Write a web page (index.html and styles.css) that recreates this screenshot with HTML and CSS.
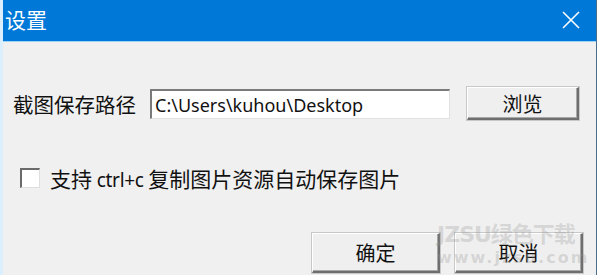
FILE: index.html
```html
<!DOCTYPE html>
<html lang="zh-CN">
<head>
    <meta charset="UTF-8">
    <title>设置</title>
  <link rel="stylesheet" href="styles.css">
</head>
<body>
  <div class="window">
    <div class="titlebar">
      <span class="title">设置</span>
      <span class="close">
        <svg width="18" height="18" viewBox="0 0 18 18">
          <path d="M1 1 L17 17 M17 1 L1 17" stroke="#ffffff" stroke-width="1.6" fill="none"/>
        </svg>
      </span>
    </div>

    <div class="content">
      <div class="row path-row">
        <label class="label">截图保存路径</label>
        <input class="path" type="text" value="C:\Users\kuhou\Desktop">
        <button class="btn browse">浏览</button>
      </div>

      <div class="row check-row">
        <span class="checkbox"></span>
        <span class="check-text">支持 <span class="latin">ctrl+c</span> 复制图片资源自动保存图片</span>
      </div>

      <div class="row actions">
        <button class="btn big">确定</button>
        <button class="btn big">取消</button>
      </div>
    </div>

    <div class="watermark">
      <div class="wm-big">JZSU绿色下载</div>
      <div class="wm-small">www.jzsu.com</div>
    </div>
  </div>
</body>
</html>
```

FILE: styles.css
```css
body {
  margin: 0;
  background: #ffffff;
  font-family: "Noto Sans CJK SC", "DejaVu Sans", sans-serif;
  overflow: hidden;
}

.window {
  position: relative;
  width: 597px;
  height: 275px;
  background: #f0f0f0;
  border-left: 3px solid #dcefff;
  border-right: 1px solid #4a6d8c;
  box-sizing: border-box;
}

.titlebar {
  display: flex;
  align-items: center;
  justify-content: space-between;
  height: 41px;
  background: #0078d7;
  border-bottom: 1px solid #9fd3f5;
  padding: 0 16px 0 2px;
}

.title {
  color: #ffffff;
  font-size: 21px;
  margin-top: -3px;
}

.close {
  display: flex;
  margin-top: -2px;
}

.content {
  padding: 46px 0 0 10px;
}

.row {
  display: flex;
  align-items: center;
}

.label {
  font-size: 20.5px;
  color: #111111;
  width: 137px;
}

.path {
  width: 300px;
  height: 30px;
  box-sizing: border-box;
  border-top: 2px solid #7a7a7a;
  border-left: 2px solid #7a7a7a;
  border-right: 1px solid #e0e0e0;
  border-bottom: 1px solid #e0e0e0;
  background: #ffffff;
  font-family: "Noto Sans", "DejaVu Sans", sans-serif;
  font-size: 18px;
  padding: 0 3px;
  color: #111111;
  outline: none;
}

.btn {
  box-sizing: border-box;
  background: #efefef;
  border-top: 1px solid #ffffff;
  border-left: 1px solid #ffffff;
  border-right: 2px solid #6e6e6e;
  border-bottom: 2px solid #6e6e6e;
  box-shadow: inset -1px -1px 0 #a8a8a8, 0 0 0 1px #c8c8c8;
  font-family: "Noto Sans CJK SC", sans-serif;
  font-size: 20px;
  color: #111111;
  padding: 0;
}

.browse {
  width: 112px;
  height: 33px;
  margin-left: 17px;
  margin-top: -1px;
}

.check-row {
  margin-top: 43px;
  padding-left: 7px;
}

.checkbox {
  width: 20px;
  height: 20px;
  box-sizing: border-box;
  background: #ffffff;
  border-top: 2px solid #6a6a6a;
  border-left: 2px solid #6a6a6a;
  border-right: 1px solid #dedede;
  border-bottom: 1px solid #dedede;
}

.check-text {
  margin-left: 10px;
  font-size: 21px;
  color: #111111;
}

.latin {
  font-family: "Noto Sans", sans-serif;
  font-size: 19px;
  letter-spacing: -0.3px;
}

.actions {
  margin-top: 40px;
  padding-left: 299px;
  gap: 15px;
}

.big {
  width: 128px;
  height: 40px;
}

.watermark {
  position: absolute;
  left: 434px;
  top: 222px;
  color: rgba(150, 150, 150, 0.3);
  font-family: "DejaVu Sans", "Noto Sans CJK SC", sans-serif;
  pointer-events: none;
}

.wm-big {
  font-size: 22px;
  font-weight: bold;
  letter-spacing: -1px;
  line-height: 26px;
}

.wm-small {
  font-size: 16px;
  font-weight: bold;
  line-height: 20px;
  letter-spacing: 2px;
}
```
